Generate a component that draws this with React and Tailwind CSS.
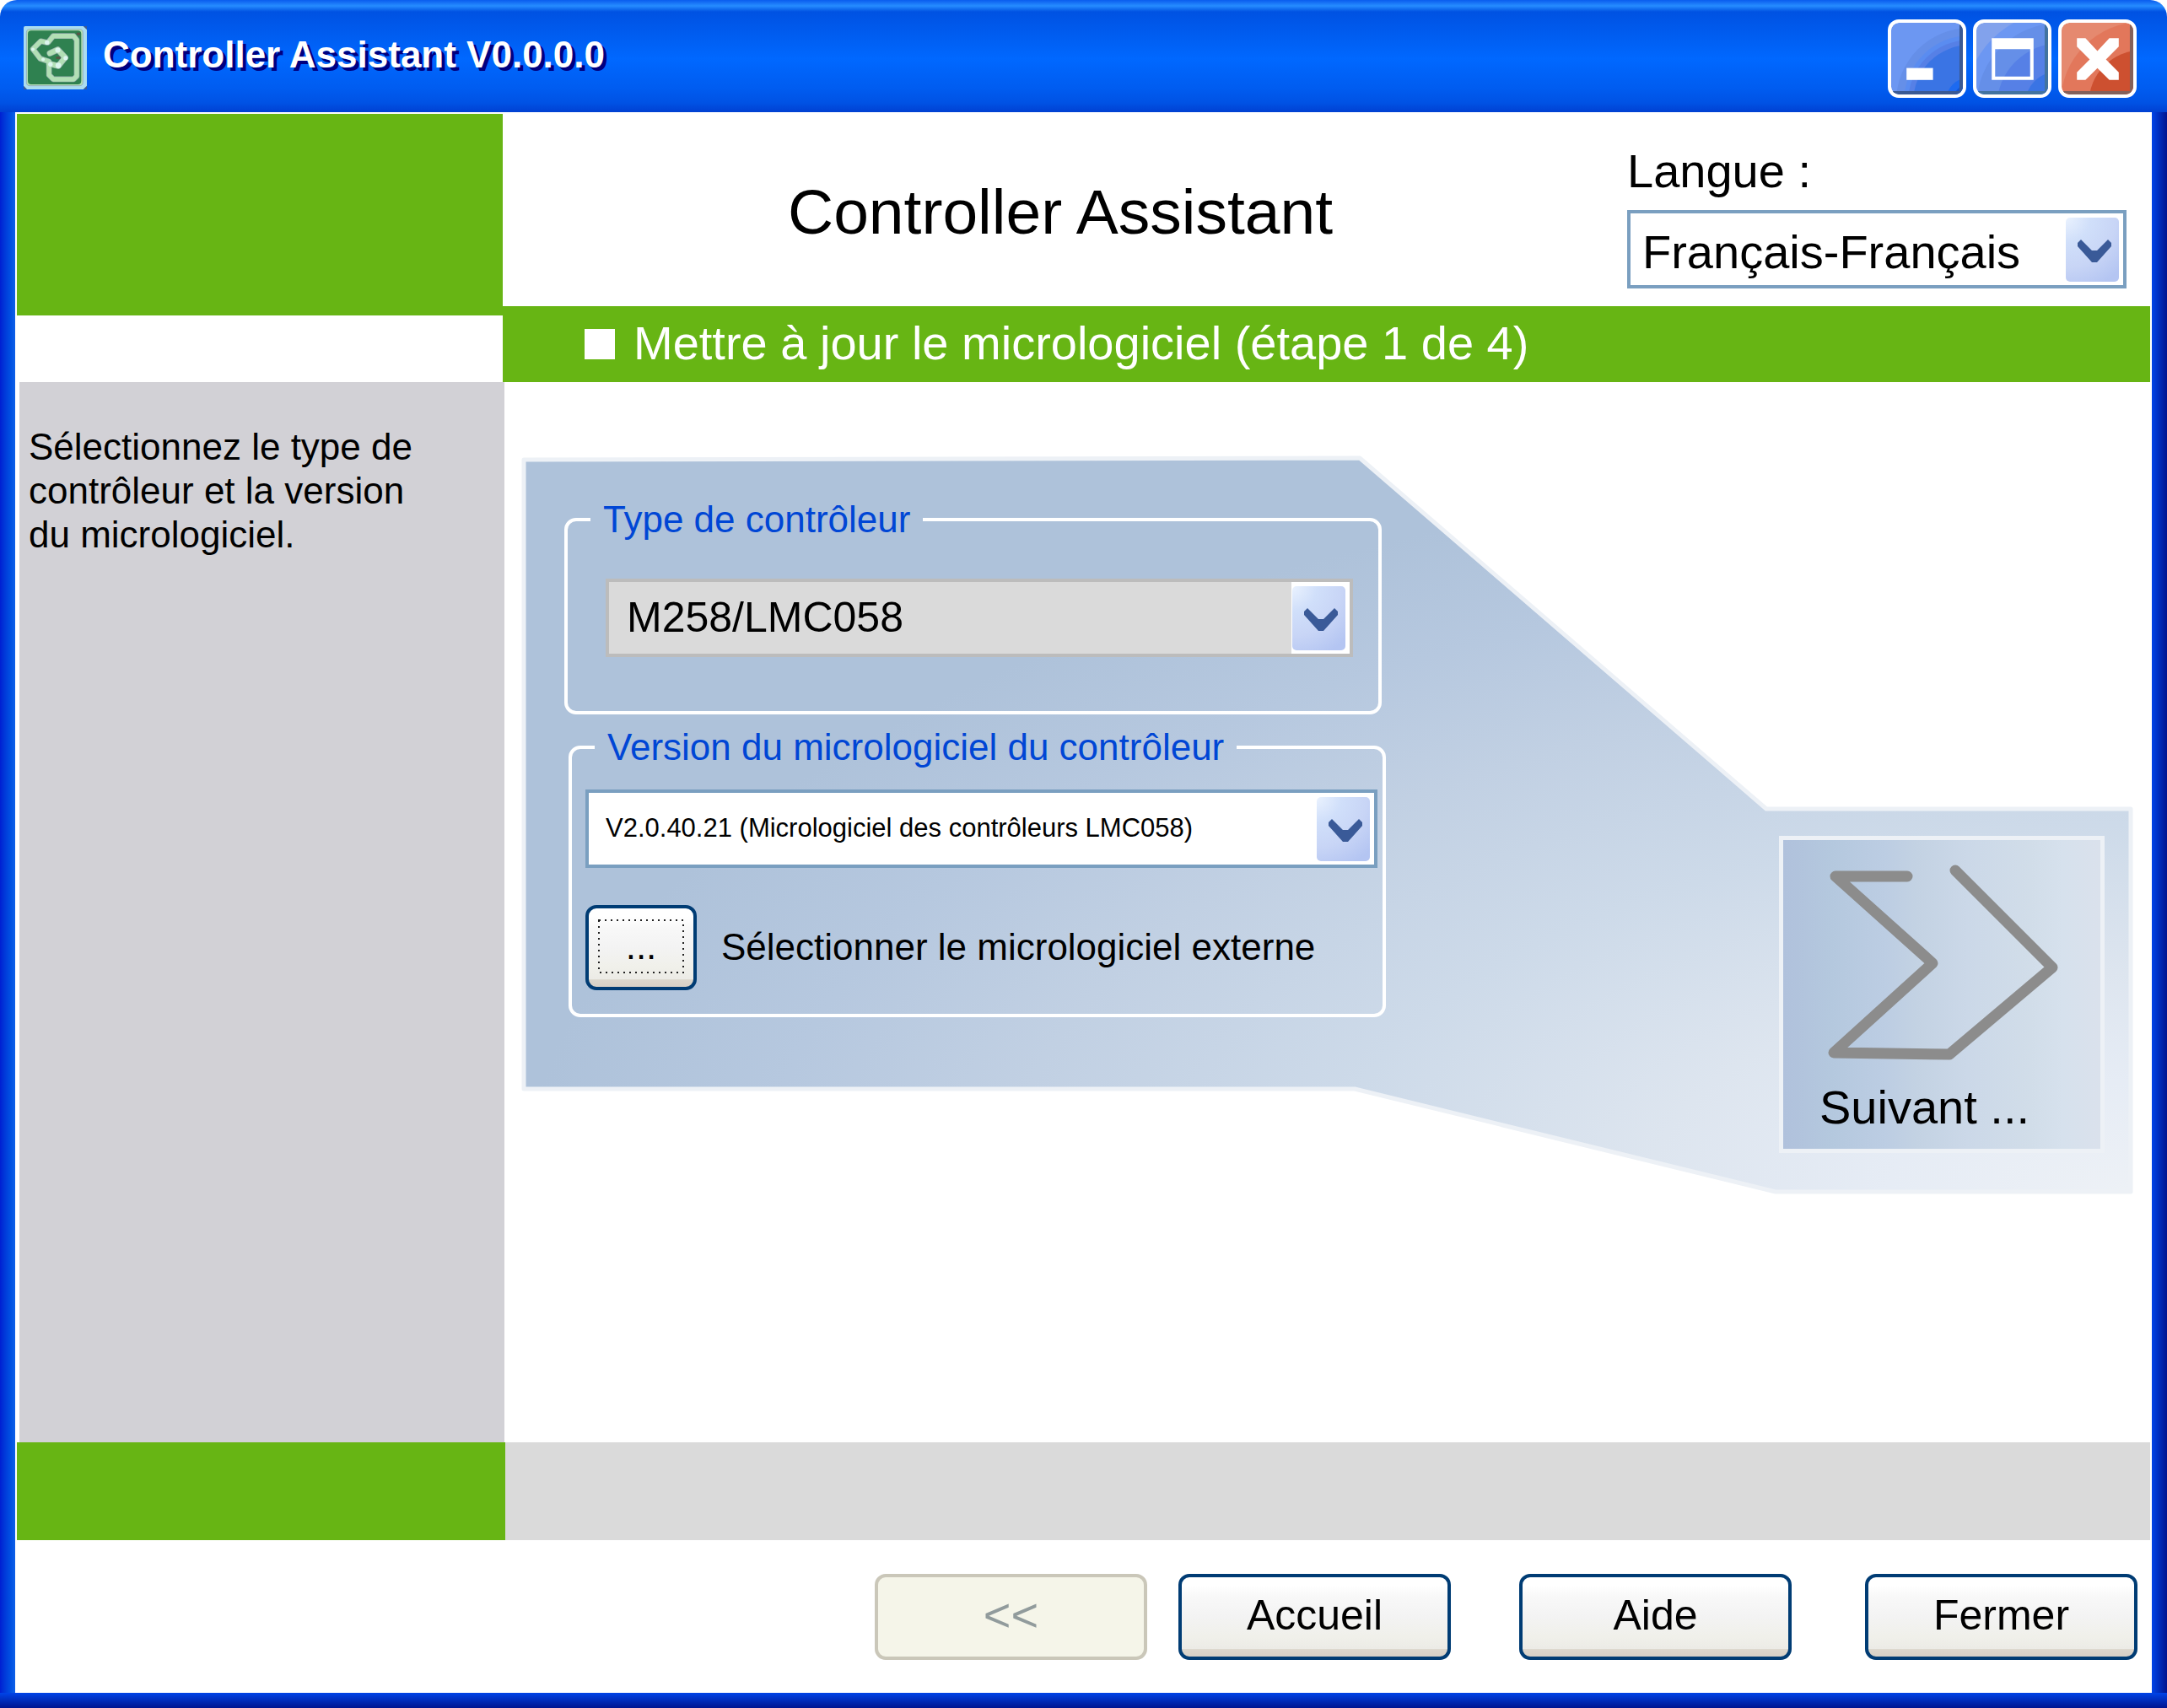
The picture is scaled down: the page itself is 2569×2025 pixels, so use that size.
import React, { useState } from 'react';

const LANGUAGES = ['Français-Français', 'English-English', 'Deutsch-Deutsch'];
const CONTROLLERS = ['M258/LMC058'];
const FIRMWARES = ['V2.0.40.21 (Micrologiciel des contrôleurs LMC058)'];

const AppIcon = () => (
  <svg viewBox="25 27 224 224" className="h-[75px] w-[75px]" aria-hidden="true">
    <rect x="25" y="27" width="224" height="224" rx="6" fill="#aadcf0" />
    <path d="M236 27h13v13zM249 238v13h-13zM25 238v13h12z" fill="#3a5a94" />
    <rect x="35" y="38" width="200" height="200" rx="12" fill="#b2dfb5" stroke="#8a9bb8" strokeWidth="2" />
    <rect x="40" y="43" width="189" height="190" rx="12" fill="#2f8150" />
    <g fill="none" strokeLinejoin="round" strokeLinecap="round">
      <path
        d="M108 85L86 80L58 108L84 142L115 152V200L130 215H202L213 204V76L202 62H130L112 84"
        stroke="#8fa8a8"
        strokeWidth="20"
      />
      <path d="M118 123L146 110L172 138L148 168L116 160" stroke="#8fa8a8" strokeWidth="22" />
      <path
        d="M108 85L86 80L58 108L84 142L115 152V200L130 215H202L213 204V76L202 62H130L112 84"
        stroke="#b2dfb5"
        strokeWidth="16"
      />
      <path d="M118 123L146 110L172 138L148 168L116 160" stroke="#b2dfb5" strokeWidth="18" />
    </g>
    <g fill="#dcf5ee">
      <circle cx="108" cy="85" r="8" />
      <circle cx="58" cy="109" r="6" />
      <circle cx="94" cy="145" r="6" />
      <circle cx="146" cy="112" r="9" />
      <circle cx="174" cy="140" r="8" />
      <circle cx="148" cy="166" r="10" />
      <circle cx="120" cy="162" r="8" />
    </g>
    <rect x="140" y="135" width="15" height="8" fill="#5a5548" />
    <rect x="213" y="50" width="12" height="9" fill="#5a5548" />
  </svg>
);

const MinimizeIcon = () => (
  <svg viewBox="0 0 84 84" className="h-full w-full" aria-hidden="true">
    <rect width="84" height="84" fill="#6c97f2" />
    <circle cx="92" cy="92" r="86" fill="#658fe8" />
    <circle cx="92" cy="92" r="77" fill="#5a8cf0" />
    <circle cx="92" cy="92" r="72" fill="#5680e6" />
    <circle cx="92" cy="92" r="66" fill="#3a74e4" />
    <circle cx="92" cy="92" r="28" fill="#1d6af0" />
    <circle cx="92" cy="92" r="20" fill="#1255d4" />
    <path d="M80 0h4v84H0v-4h80z" fill="#3a5a94" />
    <rect x="18" y="53" width="31" height="14" fill="#fff" />
  </svg>
);

const MaximizeIcon = () => (
  <svg viewBox="0 0 84 84" className="h-full w-full" aria-hidden="true">
    <rect width="84" height="84" fill="#82a2ec" />
    <circle cx="98" cy="98" r="112" fill="#6c97f2" />
    <circle cx="98" cy="98" r="98" fill="#658fe8" />
    <circle cx="98" cy="98" r="74" fill="#5680e6" />
    <circle cx="98" cy="98" r="42" fill="#3a74e4" />
    <path d="M80 0h4v84H0v-4h80z" fill="#4273a0" />
    <path d="M18 18h49v49H18zM22 31v32h41V31z" fill="#fff" fillRule="evenodd" />
  </svg>
);

const CloseIcon = () => (
  <svg viewBox="0 0 84 84" className="h-full w-full" aria-hidden="true">
    <rect width="84" height="84" fill="#e5896f" />
    <circle cx="94" cy="94" r="95" fill="#e2775b" />
    <circle cx="94" cy="94" r="62" fill="#cd5030" />
    <path d="M80 0h4v84H0v-4h80z" fill="#84605a" />
    <path
      d="M18 18h10l14 15 14-15h11v10L52 43l15 15v9H56L42 53 28 67H18V58l15-15L18 28z"
      fill="#fff"
    />
  </svg>
);

const WindowButton = ({ label, children }) => (
  <button
    type="button"
    aria-label={label}
    className="h-[93px] w-[93px] overflow-hidden rounded-[13px] border-[4px] border-white bg-white"
  >
    <div className="h-full w-full overflow-hidden rounded-[9px]">{children}</div>
  </button>
);

// native select with the framed arrow drawn over its right end
const SelectBox = ({ id, label, options, value, onChange, frame, text }) => (
  <div className="relative">
    <select
      id={id}
      aria-label={label}
      value={value}
      onChange={(e) => onChange(e.target.value)}
      className={`block h-[93px] w-full appearance-none rounded-none border-[4px] pr-[76px] text-black outline-none ${frame} ${text}`}
    >
      {options.map((option) => (
        <option key={option}>{option}</option>
      ))}
    </select>
    <span className="pointer-events-none absolute inset-y-[4px] right-[4px] flex w-[69px] items-center justify-center bg-white pr-[4px]">
      <span className="flex h-[76px] w-[63px] items-center justify-center rounded-[5px] bg-[radial-gradient(circle_at_0%_0%,#eaf2fe_0%,#d0dffa_30%,#c8d5f6_60%,#b4c5f2_90%)]">
        <svg viewBox="0 0 40 27" className="ml-1 mt-1 h-[27px] w-[40px]" aria-hidden="true">
          <path d="M4 0L0 4v4l17 19h6L40 8V4l-4-4-13 13h-6z" fill="#3a5a98" />
        </svg>
      </span>
    </span>
  </div>
);

const Group = ({ title, className, children }) => (
  <fieldset className={`w-[969px] rounded-[14px] border-[4px] border-white ${className}`}>
    <legend className="px-[15px] text-[44px] leading-[52px] text-[#0046d5]">{title}</legend>
    {children}
  </fieldset>
);

const FooterButton = ({ className = '', disabled, children }) => (
  <button
    type="button"
    disabled={disabled}
    className={`h-[102px] w-[323px] rounded-[13px] border-[4px] pb-[4px] leading-[56px] ${
      disabled
        ? 'border-[#cac7b9] bg-[#f5f5e9] text-[56px] text-[#919b9c]'
        : 'border-[#003c74] bg-[linear-gradient(#ffffff_0%,#ffffff_10%,#f8f8f8_25%,#f3f3f3_50%,#f0f0ea_75%,#ecebe6_90%,#dcd7cd_91%,#d8d0c6_100%)] text-[50px] text-black'
    } ${className}`}
  >
    {children}
  </button>
);

const App = () => {
  const [language, setLanguage] = useState(LANGUAGES[0]);
  const [controller, setController] = useState(CONTROLLERS[0]);
  const [firmware, setFirmware] = useState(FIRMWARES[0]);

  return (
    <div className="flex min-h-screen flex-col bg-white font-['Liberation_Sans',Arial,sans-serif] text-black">
      {/* Title bar */}
      <div className="flex h-[133px] items-center rounded-t-[20px] bg-[linear-gradient(#0a5cee_0px,#268cff_7px,#0052e2_14px,#0058ea_30px,#0068ff_70px,#005cf0_105px,#0052e4_122px,#0040d2_133px)] pl-[28px] pr-[36px]">
        <div className="pt-[4px]">
          <AppIcon />
        </div>
        <div className="flex-1 pb-1 pl-[19px] text-[44px] font-bold leading-[52px] text-white [text-shadow:4px_4px_0_#00007f]">
          Controller Assistant V0.0.0.0
        </div>
        <div className="flex gap-[8px] pt-1.5">
          <WindowButton label="Réduire">
            <MinimizeIcon />
          </WindowButton>
          <WindowButton label="Agrandir">
            <MaximizeIcon />
          </WindowButton>
          <WindowButton label="Fermer la fenêtre">
            <CloseIcon />
          </WindowButton>
        </div>
      </div>

      <div className="flex flex-1">
        <div className="w-[18px] bg-linear-to-r from-[#001ed2] to-[#0f60e8]" />

        <div className="flex flex-1 flex-col">
          <div className="flex flex-1">
            {/* Sidebar */}
            <aside className="flex w-[580px] flex-col pt-[2px]">
              <div className="ml-[2px] mr-[2px] h-[239px] bg-[#67b514]" />
              <div className="ml-[5px] mt-[79px] flex-1 bg-[#d2d1d6] pl-[11px] pr-[96px] pt-[51px] text-[44px] leading-[52px]">
                Sélectionnez le type de contrôleur et la version du micrologiciel.
              </div>
            </aside>

            <main className="flex flex-1 flex-col">
              <header className="flex h-[230px] items-center justify-between pl-[336px] pr-[30px]">
                <h1 className="pt-[6px] text-[75px] leading-[84px]">Controller Assistant</h1>
                <div className="w-[592px] pt-[17px]">
                  <label htmlFor="language" className="mb-[14px] block text-[56px] leading-[64px]">
                    Langue :
                  </label>
                  <SelectBox
                    id="language"
                    options={LANGUAGES}
                    value={language}
                    onChange={setLanguage}
                    frame="border-[#7a9fc0] bg-white pt-[4px]"
                    text="pl-[14px] text-[56px]"
                  />
                </div>
              </header>

              <h2 className="-ml-[2px] mr-[2px] flex h-[90px] items-center gap-[22px] bg-[#67b514] pl-[97px] text-[56px] leading-[64px] text-white">
                <span className="h-[36px] w-[36px] bg-white" />
                <span className="pb-[3px]">Mettre à jour le micrologiciel (étape 1 de 4)</span>
              </h2>

              {/* Selection panel */}
              <div className="relative ml-[20px] mr-[22px] mt-[87px] flex justify-between pl-[51px] pr-[34px]">
                <svg
                  viewBox="0 0 1911 876"
                  preserveAspectRatio="none"
                  className="absolute inset-0 h-full w-full"
                  aria-hidden="true"
                >
                  <defs>
                    <radialGradient id="panel" cx="1" cy="1" r="1">
                      <stop offset="0" stopColor="#edf1f6" />
                      <stop offset="0.15" stopColor="#e6ecf5" />
                      <stop offset="0.3" stopColor="#dde5ef" />
                      <stop offset="0.5" stopColor="#cddae9" />
                      <stop offset="0.7" stopColor="#c1d0e3" />
                      <stop offset="0.85" stopColor="#b6c8df" />
                      <stop offset="1" stopColor="#aec2da" />
                    </radialGradient>
                  </defs>
                  <path
                    d="M3 5L994 3L1476 419H1908V873H1487L988 751H3Z"
                    fill="url(#panel)"
                    stroke="#edf1f6"
                    strokeWidth="5"
                    strokeLinejoin="round"
                  />
                </svg>

                <div className="relative pb-[210px] pt-[50px]">
                  <Group title="Type de contrôleur" className="pb-[64px] pl-[45px] pr-[30px] [&>legend]:-ml-[18px]">
                    <div className="pt-[44px]">
                      <SelectBox
                        id="controller"
                        label="Type de contrôleur"
                        options={CONTROLLERS}
                        value={controller}
                        onChange={setController}
                        frame="border-[#bcbcbc] bg-[#dadada]"
                        text="pl-[21px] text-[50px]"
                      />
                    </div>
                  </Group>

                  <Group
                    title="Version du micrologiciel du contrôleur"
                    className="ml-[5px] mt-[13px] pb-[28px] pl-[16px] pr-[6px] [&>legend]:ml-[11px]"
                  >
                    <div className="pt-[24px]">
                      <SelectBox
                        id="firmware"
                        label="Version du micrologiciel du contrôleur"
                        options={FIRMWARES}
                        value={firmware}
                        onChange={setFirmware}
                        frame="border-[#7a9fc0] bg-white"
                        text="pl-[20px] text-[31px]"
                      />
                    </div>
                    <div className="mt-[44px] flex items-center gap-[29px]">
                      <button
                        id="browse"
                        type="button"
                        className="relative h-[101px] w-[132px] rounded-[13px] border-[4px] border-[#003c74] bg-[linear-gradient(#ffffff_0%,#ffffff_10%,#f8f8f8_25%,#f3f3f3_50%,#f0f0ea_75%,#ecebe6_90%,#dcd7cd_91%,#d8d0c6_100%)] pb-[4px] text-[44px] leading-[52px]"
                      >
                        <svg viewBox="0 0 124 93" className="absolute inset-0 h-full w-full" aria-hidden="true">
                          <rect
                            x="12"
                            y="14"
                            width="100"
                            height="62"
                            fill="none"
                            stroke="#222"
                            strokeWidth="2"
                            strokeDasharray="2 5"
                          />
                        </svg>
                        ...
                      </button>
                      <label htmlFor="browse" className="pb-[2px] text-[44px] leading-[52px]">
                        Sélectionner le micrologiciel externe
                      </label>
                    </div>
                  </Group>
                </div>

                <button
                  type="button"
                  className="relative mb-[49px] flex h-[376px] w-[386px] flex-col self-end border-[5px] border-[#edf1f6] bg-[linear-gradient(90deg,#b0c1dc_0%,#b4c8de_15%,#bccde3_32%,#c3d2e3_42%,#cbd8e8_58%,#d1dde9_78%,#d6e1ed_88%,#dae1ec_100%)] pl-[43px] text-left text-[56px] leading-[64px]"
                >
                  <svg viewBox="41 0 333 280" className="h-[280px] w-[333px] shrink-0" aria-hidden="true">
                    <path
                      d="M145 43H60L175 146L58 252L195 254L317 151L202 36"
                      fill="none"
                      stroke="#8c8c8c"
                      strokeWidth="13"
                      strokeLinejoin="round"
                      strokeLinecap="round"
                    />
                  </svg>
                  <span className="pt-[5px]">Suivant ...</span>
                </button>
              </div>
            </main>
          </div>

          <div className="mr-[2px] flex h-[116px]">
            <div className="ml-[2px] w-[579px] bg-[#67b514]" />
            <div className="flex-1 bg-[#dadada]" />
          </div>

          {/* Navigation buttons */}
          <footer className="flex h-[181px] items-center justify-end pr-[17px]">
            <FooterButton disabled className="mr-[37px]">
              &lt;&lt;
            </FooterButton>
            <FooterButton className="mr-[81px]">Accueil</FooterButton>
            <FooterButton className="mr-[87px]">Aide</FooterButton>
            <FooterButton>Fermer</FooterButton>
          </footer>
        </div>

        <div className="w-[18px] bg-linear-to-r from-[#0044e8] to-[#001490]" />
      </div>

      <div className="h-[18px] bg-linear-to-b from-[#0044e8] to-[#001490]" />
    </div>
  );
};

export default App;
